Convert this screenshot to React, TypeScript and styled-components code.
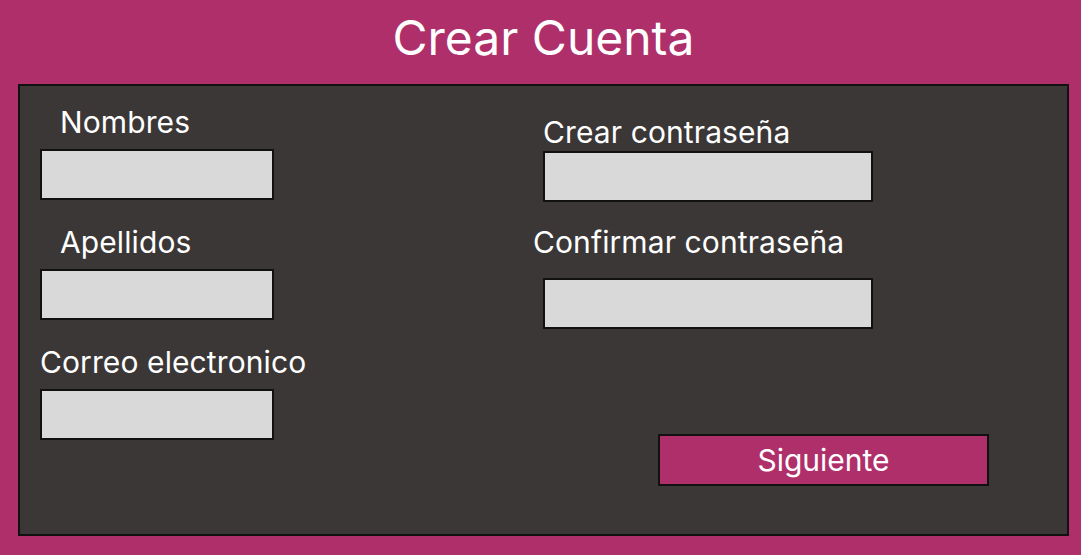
import React from "react";
import styled, { createGlobalStyle } from "styled-components";

const GlobalStyle = createGlobalStyle`
  html, body {
    margin: 0;
    padding: 0;
  }
  body {
    background: #af2f6a;
    font-family: Inter, "Noto Sans", "Liberation Sans", sans-serif;
  }
`;

const Page = styled.div`
  width: 1081px;
  height: 555px;
  background: #af2f6a;
  box-sizing: border-box;
  padding: 0 12px 19px 18px;
`;

const Title = styled.h1`
  margin: 0;
  height: 84px;
  box-sizing: border-box;
  padding-top: 9px;
  text-align: center;
  color: #ffffff;
  font-size: 48px;
  font-weight: 400;
  line-height: 58px;
`;

const Panel = styled.section`
  height: 452px;
  box-sizing: border-box;
  background: #3b3737;
  border: 2px solid #111;
  padding: 18px 20px 0 20px;
  display: grid;
  grid-template-columns: 503px 1fr;
`;

const Column = styled.div<{ $top?: number }>`
  display: flex;
  flex-direction: column;
  padding-top: ${(p) => p.$top ?? 0}px;
`;

const Field = styled.div<{ $after?: number }>`
  display: flex;
  flex-direction: column;
  margin-bottom: ${(p) => p.$after ?? 24}px;
`;

const Label = styled.label<{ $indent?: number; $gap?: number }>`
  color: #ffffff;
  font-size: 30px;
  line-height: 36px;
  letter-spacing: 0.1px;
  margin-left: ${(p) => p.$indent ?? 0}px;
  margin-bottom: ${(p) => p.$gap ?? 9}px;
`;

const Input = styled.input<{ $wide?: boolean }>`
  display: block;
  width: ${(p) => (p.$wide ? 330 : 234)}px;
  height: 51px;
  box-sizing: border-box;
  margin: 0;
  padding: 0 10px;
  background: #d9d9d9;
  border: 2px solid #111;
  border-radius: 0;
  outline: none;
  font-family: inherit;
  font-size: 20px;
`;

const NextButton = styled.button`
  margin: 81px 0 0 115px;
  width: 331px;
  height: 52px;
  box-sizing: border-box;
  background: #af2f6a;
  border: 2px solid #111;
  border-radius: 0;
  color: #ffffff;
  font-family: inherit;
  font-size: 30px;
  padding: 0;
  cursor: pointer;
`;

export default function App() {
  return (
    <>
      <GlobalStyle />
      <Page>
        <Title>Crear Cuenta</Title>
        <Panel>
          <Column>
            <Field>
              <Label $indent={20}>Nombres</Label>
              <Input type="text" />
            </Field>
            <Field>
              <Label $indent={20}>Apellidos</Label>
              <Input type="text" />
            </Field>
            <Field>
              <Label>Correo electronico</Label>
              <Input type="email" />
            </Field>
          </Column>
          <Column $top={10}>
            <Field $after={22}>
              <Label $gap={1}>Crear contraseña</Label>
              <Input type="password" $wide />
            </Field>
            <Field>
              <Label $indent={-10} $gap={18}>
                Confirmar contraseña
              </Label>
              <Input type="password" $wide />
            </Field>
            <div>
              <NextButton type="button">Siguiente</NextButton>
            </div>
          </Column>
        </Panel>
      </Page>
    </>
  );
}
